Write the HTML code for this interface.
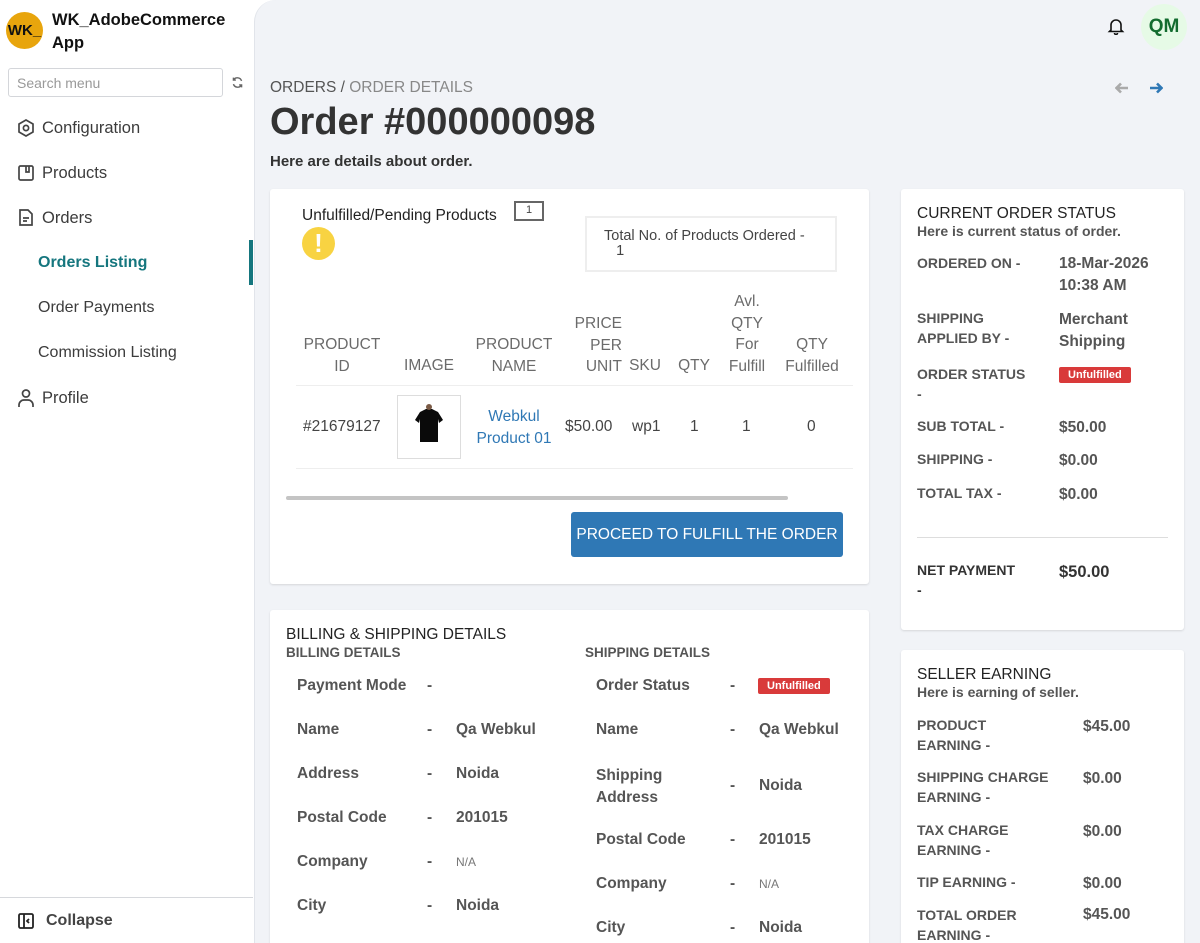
<!DOCTYPE html>
<html style="overflow:hidden;height:943px"><head><meta charset="utf-8"><style>
*{box-sizing:border-box;margin:0;padding:0}
html,body{overflow:hidden}
body{width:1200px;height:943px;overflow:hidden;font-family:"Liberation Sans",sans-serif;background:#fff;color:#444;position:relative}
.a{position:absolute;white-space:nowrap}
#side{position:absolute;left:0;top:0;width:254px;height:943px;background:#fff}
#main{position:absolute;left:254px;top:0;width:946px;height:943px;background:#f1f3f7;border-top-left-radius:22px;border-left:1px solid #e1e4ea}
.card{position:absolute;background:#fff;border-radius:3px;box-shadow:0 1px 2px rgba(0,0,0,.12)}
.nav{font-size:16.5px;color:#3c3c3c}
.th{font-size:15.5px;color:#6b6b6b;text-align:center;line-height:21.5px}
.lbl{font-size:14px;font-weight:bold;color:#555;line-height:20px}
.val{font-size:15.5px;font-weight:bold;color:#555;line-height:22px}
.badge{background:#d93a3a;color:#fff;font-size:11px;font-weight:bold;border-radius:2px;padding:2px 9px}
.bl{font-size:15.5px;font-weight:bold;color:#555}
</style></head><body>
<div id="side">
 <div class="a" style="left:6px;top:12px;width:37px;height:37px;border-radius:50%;background:#e8a50d;color:#111;font-size:15px;font-weight:bold;line-height:37px;text-align:center">WK_</div>
 <div class="a" style="left:52px;top:9px;font-size:16.5px;font-weight:bold;color:#111;line-height:23px">WK_AdobeCommerce<br>App</div>
 <div class="a" style="left:8px;top:68px;width:215px;height:29px;border:1px solid #d4d6da;border-radius:3px;font-size:14px;color:#999;padding:6px 8px">Search menu</div>
 <svg class="a" style="left:231px;top:76px" width="13" height="13" viewBox="0 0 16 16" fill="none" stroke="#666" stroke-width="1.8"><path d="M13 6A5.5 5.5 0 0 0 3 5M3 2v3h3M3 10a5.5 5.5 0 0 0 10 1M13 14v-3h-3"/></svg>
 <svg class="a" style="left:16px;top:118px" width="20" height="20" viewBox="0 0 20 20" fill="none" stroke="#444" stroke-width="1.7"><path d="M10 2l7 4v8l-7 4-7-4V6z"/><circle cx="10" cy="10" r="2.6"/></svg>
 <div class="a nav" style="left:42px;top:119px">Configuration</div>
 <svg class="a" style="left:17px;top:164px" width="18" height="18" viewBox="0 0 18 18" fill="none" stroke="#444" stroke-width="1.7"><rect x="2" y="2" width="14" height="14" rx="1.5"/><path d="M9 2v6h3V2"/></svg>
 <div class="a nav" style="left:42px;top:164px">Products</div>
 <svg class="a" style="left:17px;top:208px" width="18" height="19" viewBox="0 0 18 19" fill="none" stroke="#444" stroke-width="1.7"><path d="M3 2h8l4 4v11H3z M6 10h6M6 13h4"/></svg>
 <div class="a nav" style="left:42px;top:209px">Orders</div>
 <div class="a" style="left:38px;top:254px;font-size:16px;font-weight:bold;color:#15767e">Orders Listing</div>
 <div class="a" style="left:249px;top:240px;width:4px;height:45px;background:#15767e"></div>
 <div class="a nav" style="left:38px;top:299px;font-size:16px">Order Payments</div>
 <div class="a nav" style="left:38px;top:344px;font-size:16px">Commission Listing</div>
 <svg class="a" style="left:17px;top:388px" width="18" height="20" viewBox="0 0 18 20" fill="none" stroke="#444" stroke-width="1.7"><circle cx="9" cy="5.5" r="3.5"/><path d="M2 19v-2a5 5 0 0 1 5-5h4a5 5 0 0 1 5 5v2"/></svg>
 <div class="a nav" style="left:42px;top:389px">Profile</div>
 <div class="a" style="left:0;top:897px;width:253px;border-top:1px solid #d6d8dc"></div>
 <svg class="a" style="left:17px;top:912px" width="18" height="18" viewBox="0 0 18 18" fill="none" stroke="#222" stroke-width="1.8"><rect x="2" y="2" width="14" height="14" rx="1.5"/><path d="M7 2v14M12 7l-2 2 2 2"/></svg>
 <div class="a" style="left:46px;top:912px;font-size:16px;font-weight:bold;color:#444">Collapse</div>
</div>
<div id="main"></div>
<svg class="a" style="left:1107px;top:17px" width="18" height="18" viewBox="0 0 18 18" fill="none" stroke="#111" stroke-width="1.6"><path d="M4 13V8a5 5 0 0 1 10 0v5l1.5 1.5h-13z M7.5 16a1.5 1.5 0 0 0 3 0"/></svg>
<div class="a" style="left:1141px;top:4px;width:46px;height:46px;border-radius:50%;background:#e6fae6;color:#136c2f;font-size:19px;font-weight:bold;text-align:center;line-height:46px">QM</div>
<svg class="a" style="left:1115px;top:82px" width="14" height="12" viewBox="0 0 14 12" fill="none" stroke="#aaa" stroke-width="2.6"><path d="M13 6H2M6 1.5L1.5 6 6 10.5"/></svg>
<svg class="a" style="left:1149px;top:82px" width="14" height="12" viewBox="0 0 14 12" fill="none" stroke="#2f78b5" stroke-width="2.6"><path d="M1 6h11M8 1.5L12.5 6 8 10.5"/></svg>
<div class="a" style="left:270px;top:79px;font-size:15.5px;color:#555">ORDERS / <span style="color:#888">ORDER DETAILS</span></div>
<div class="a" style="left:270px;top:101px;font-size:38px;font-weight:bold;color:#333">Order #000000098</div>
<div class="a" style="left:270px;top:153px;font-size:15px;font-weight:bold;color:#333">Here are details about order.</div>

<div class="card" style="left:270px;top:189px;width:599px;height:395px">
 <div class="a" style="left:32px;top:18px;font-size:15.5px;color:#222">Unfulfilled/Pending Products</div>
 <div class="a" style="left:244px;top:12px;width:30px;height:20px;border:2px solid #666;font-size:11px;text-align:center;line-height:15px;color:#444">1</div>
 <div class="a" style="left:32px;top:38px;width:33px;height:33px;border-radius:50%;background:#f8d342;color:#fff;font-size:26px;font-weight:bold;text-align:center;line-height:33px">!</div>
 <div class="a" style="left:315px;top:27px;width:252px;height:56px;border:2px solid #eee;font-size:14.5px;color:#444;padding:11px 0 0 17px;line-height:15px">Total No. of Products Ordered -<br>&nbsp;&nbsp;&nbsp;1</div>
 <div class="a th" style="left:30px;top:145px;width:84px">PRODUCT<br>ID</div>
 <div class="a th" style="left:120px;top:166px;width:78px">IMAGE</div>
 <div class="a th" style="left:198px;top:145px;width:92px">PRODUCT<br>NAME</div>
 <div class="a th" style="left:290px;top:124px;width:62px;text-align:right">PRICE<br>PER<br>UNIT</div>
 <div class="a th" style="left:355px;top:166px;width:40px">SKU</div>
 <div class="a th" style="left:403px;top:166px;width:42px">QTY</div>
 <div class="a th" style="left:448px;top:102px;width:58px">Avl.<br>QTY<br>For<br>Fulfill</div>
 <div class="a th" style="left:508px;top:145px;width:68px">QTY<br>Fulfilled</div>
 <div class="a" style="left:26px;top:196px;width:557px;border-top:1px solid #eee"></div>
 <div class="a" style="left:33px;top:229px;font-size:15.5px;color:#444">#21679127</div>
 <div class="a" style="left:127px;top:206px;width:64px;height:64px;border:1px solid #ddd;background:#fff">
  <svg width="62" height="62" viewBox="0 0 62 62"><path d="M22 16l6-3h6l6 3 5 8-4 3-1-4v23h-18V23l-1 4-4-3z" fill="#0a0a0a"/><circle cx="31" cy="11" r="3" fill="#7a5a45"/></svg>
 </div>
 <div class="a" style="left:198px;top:217px;width:92px;text-align:center;font-size:15.5px;color:#2f78b5;line-height:21.5px">Webkul<br>Product 01</div>
 <div class="a" style="left:295px;top:229px;font-size:15.5px;color:#444">$50.00</div>
 <div class="a" style="left:362px;top:229px;font-size:15.5px;color:#444">wp1</div>
 <div class="a" style="left:420px;top:229px;font-size:15.5px;color:#444">1</div>
 <div class="a" style="left:472px;top:229px;font-size:15.5px;color:#444">1</div>
 <div class="a" style="left:537px;top:229px;font-size:15.5px;color:#444">0</div>
 <div class="a" style="left:26px;top:279px;width:557px;border-top:1px solid #eee"></div>
 <div class="a" style="left:16px;top:307px;width:502px;height:4px;background:#c4c4c4;border-radius:2px"></div>
 <div class="a" style="left:301px;top:323px;width:272px;height:45px;background:#2f78b5;border-radius:3px;color:#fff;font-size:15.5px;text-align:center;line-height:45px">PROCEED TO FULFILL THE ORDER</div>
</div>

<div class="card" style="left:270px;top:610px;width:599px;height:340px">
 <div class="a" style="left:16px;top:16px;font-size:15.5px;color:#222">BILLING &amp; SHIPPING DETAILS</div>
 <div class="a" style="left:16px;top:35px;font-size:13.5px;font-weight:bold;color:#555">BILLING DETAILS</div>
 <div class="a" style="left:315px;top:35px;font-size:13.5px;font-weight:bold;color:#555">SHIPPING DETAILS</div>
 <div class="a bl" style="left:27px;top:67px">Payment Mode</div><div class="a bl" style="left:157px;top:67px">-</div>
 <div class="a bl" style="left:27px;top:111px">Name</div><div class="a bl" style="left:157px;top:111px">-</div><div class="a bl" style="left:186px;top:111px">Qa Webkul</div>
 <div class="a bl" style="left:27px;top:155px">Address</div><div class="a bl" style="left:157px;top:155px">-</div><div class="a bl" style="left:186px;top:155px">Noida</div>
 <div class="a bl" style="left:27px;top:199px">Postal Code</div><div class="a bl" style="left:157px;top:199px">-</div><div class="a bl" style="left:186px;top:199px">201015</div>
 <div class="a bl" style="left:27px;top:243px">Company</div><div class="a bl" style="left:157px;top:243px">-</div><div class="a" style="left:186px;top:245px;font-size:12px;color:#777">N/A</div>
 <div class="a bl" style="left:27px;top:287px">City</div><div class="a bl" style="left:157px;top:287px">-</div><div class="a bl" style="left:186px;top:287px">Noida</div>
 <div class="a bl" style="left:326px;top:67px">Order Status</div><div class="a bl" style="left:460px;top:67px">-</div><div class="a badge" style="left:488px;top:68px">Unfulfilled</div>
 <div class="a bl" style="left:326px;top:111px">Name</div><div class="a bl" style="left:460px;top:111px">-</div><div class="a bl" style="left:489px;top:111px">Qa Webkul</div>
 <div class="a bl" style="left:326px;top:155px;line-height:22px">Shipping<br>Address</div><div class="a bl" style="left:460px;top:167px">-</div><div class="a bl" style="left:489px;top:167px">Noida</div>
 <div class="a bl" style="left:326px;top:221px">Postal Code</div><div class="a bl" style="left:460px;top:221px">-</div><div class="a bl" style="left:489px;top:221px">201015</div>
 <div class="a bl" style="left:326px;top:265px">Company</div><div class="a bl" style="left:460px;top:265px">-</div><div class="a" style="left:489px;top:267px;font-size:12px;color:#777">N/A</div>
 <div class="a bl" style="left:326px;top:309px">City</div><div class="a bl" style="left:460px;top:309px">-</div><div class="a bl" style="left:489px;top:309px">Noida</div>
</div>

<div class="card" style="left:901px;top:189px;width:283px;height:441px">
 <div class="a" style="left:16px;top:16px;font-size:15.5px;color:#222">CURRENT ORDER STATUS</div>
 <div class="a" style="left:16px;top:34px;font-size:14px;font-weight:bold;color:#555">Here is current status of order.</div>
 <div class="a lbl" style="left:16px;top:64px">ORDERED ON -</div><div class="a val" style="left:158px;top:64px">18-Mar-2026<br>10:38 AM</div>
 <div class="a lbl" style="left:16px;top:119px">SHIPPING<br>APPLIED BY -</div><div class="a val" style="left:158px;top:120px">Merchant<br>Shipping</div>
 <div class="a lbl" style="left:16px;top:175px">ORDER STATUS<br>-</div><div class="a badge" style="left:158px;top:178px">Unfulfilled</div>
 <div class="a lbl" style="left:16px;top:227px">SUB TOTAL -</div><div class="a val" style="left:158px;top:228px">$50.00</div>
 <div class="a lbl" style="left:16px;top:260px">SHIPPING -</div><div class="a val" style="left:158px;top:261px">$0.00</div>
 <div class="a lbl" style="left:16px;top:294px">TOTAL TAX -</div><div class="a val" style="left:158px;top:295px">$0.00</div>
 <div class="a" style="left:16px;top:348px;width:251px;border-top:1px solid #ddd"></div>
 <div class="a lbl" style="left:16px;top:371px;color:#333">NET PAYMENT<br>-</div><div class="a val" style="left:158px;top:372px;font-size:16.5px;color:#333">$50.00</div>
</div>

<div class="card" style="left:901px;top:650px;width:283px;height:310px">
 <div class="a" style="left:16px;top:16px;font-size:15.5px;color:#222">SELLER EARNING</div>
 <div class="a" style="left:16px;top:34px;font-size:14px;font-weight:bold;color:#555">Here is earning of seller.</div>
 <div class="a lbl" style="left:16px;top:65px">PRODUCT<br>EARNING -</div><div class="a val" style="left:182px;top:66px">$45.00</div>
 <div class="a lbl" style="left:16px;top:117px">SHIPPING CHARGE<br>EARNING -</div><div class="a val" style="left:182px;top:118px">$0.00</div>
 <div class="a lbl" style="left:16px;top:170px">TAX CHARGE<br>EARNING -</div><div class="a val" style="left:182px;top:171px">$0.00</div>
 <div class="a lbl" style="left:16px;top:222px">TIP EARNING -</div><div class="a val" style="left:182px;top:223px">$0.00</div>
 <div class="a lbl" style="left:16px;top:255px">TOTAL ORDER<br>EARNING -</div><div class="a val" style="left:182px;top:254px">$45.00</div>
</div>
</body></html>
